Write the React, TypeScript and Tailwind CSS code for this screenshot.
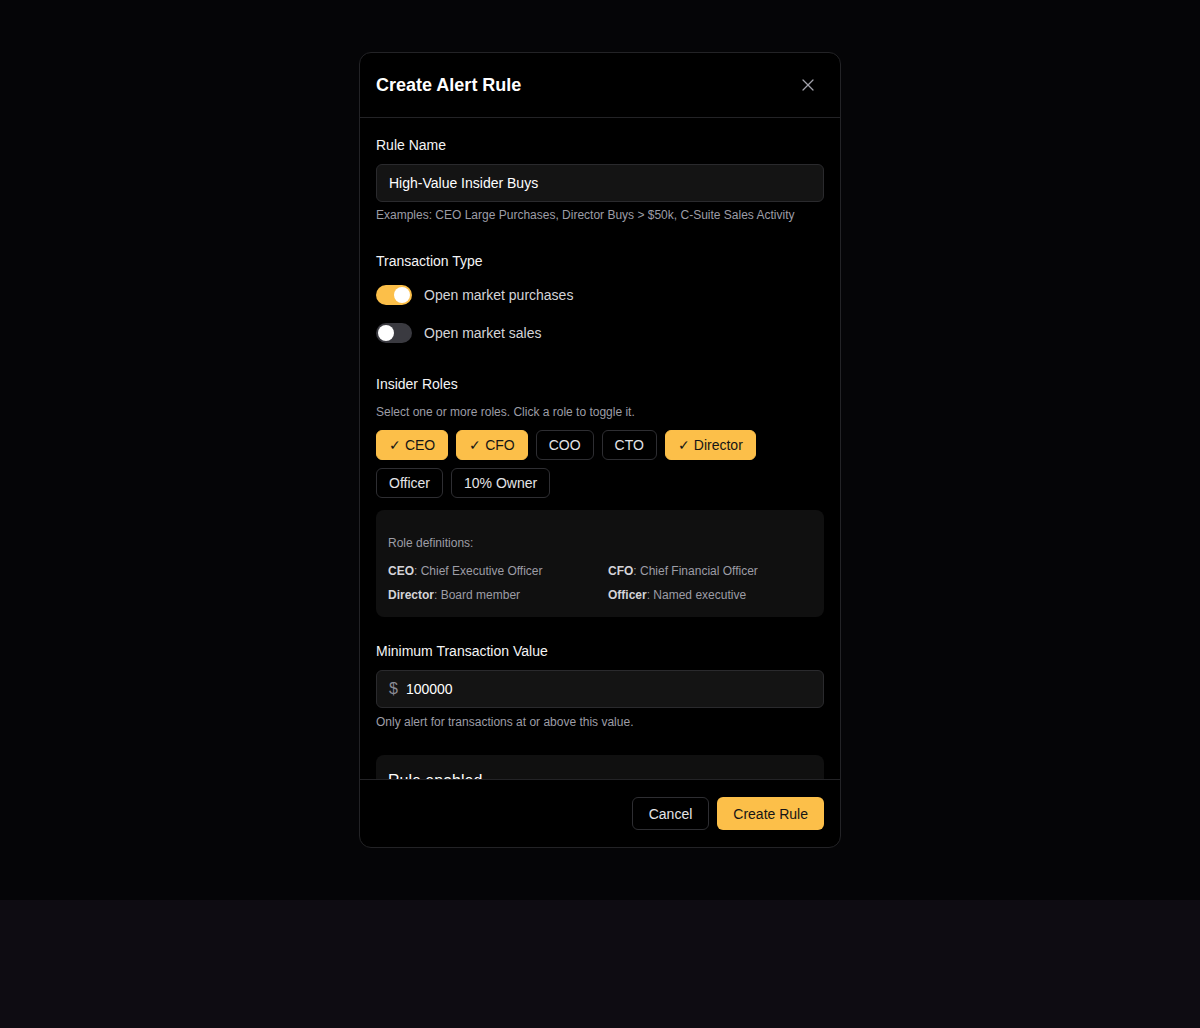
import { X } from "lucide-react";

const roles = [
  { label: "CEO", on: true },
  { label: "CFO", on: true },
  { label: "COO", on: false },
  { label: "CTO", on: false },
  { label: "Director", on: true },
  { label: "Officer", on: false },
  { label: "10% Owner", on: false },
];

const defs = [
  { key: "CEO", text: "Chief Executive Officer" },
  { key: "CFO", text: "Chief Financial Officer" },
  { key: "Director", text: "Board member" },
  { key: "Officer", text: "Named executive" },
];

function Toggle({ on, label }: { on: boolean; label: string }) {
  return (
    <div className="flex h-5 items-center gap-3">
      <span
        className={`flex h-5 w-9 items-center rounded-full p-0.5 ${
          on ? "justify-end bg-[#fcbf49]" : "justify-start bg-[#3a3a40]"
        }`}
      >
        <span className="h-4 w-4 rounded-full bg-white" />
      </span>
      <span className="text-sm text-[#d4d4d8]">{label}</span>
    </div>
  );
}

export default function App() {
  return (
    <div className="min-h-[1028px] bg-[#0e0c12] font-['Liberation_Sans',Arial,sans-serif]">
      <div className="flex h-[900px] items-center justify-center bg-[#050507]">
        <div className="flex h-[796px] w-[482px] flex-col overflow-hidden rounded-xl border border-[#232326] bg-black">
          <header className="flex h-[65px] shrink-0 items-center justify-between border-b border-[#232326] px-4">
            <h2 className="text-lg font-bold text-white">Create Alert Rule</h2>
            <button className="grid h-8 w-8 place-items-center text-[#a1a1aa]">
              <X size={20} strokeWidth={1.5} />
            </button>
          </header>

          <div className="min-h-0 flex-1 overflow-hidden px-4 pt-[17px]">
            <section>
              <label className="mb-[9px] block text-sm text-[#f4f4f5]">Rule Name</label>
              <div className="flex h-[38px] items-center rounded-md border border-[#2a2a2d] bg-[#141414] px-3 text-sm text-white">
                High-Value Insider Buys
              </div>
              <p className="mt-[5px] text-xs text-[#9d9da6]">
                Examples: CEO Large Purchases, Director Buys &gt; $50k, C-Suite Sales Activity
              </p>
            </section>

            <section className="mt-[28px]">
              <label className="block text-sm text-[#f4f4f5]">Transaction Type</label>
              <div className="mt-[14px] flex flex-col gap-[18px]">
                <Toggle on label="Open market purchases" />
                <Toggle on={false} label="Open market sales" />
              </div>
            </section>

            <section className="mt-[31px]">
              <label className="block text-sm text-[#f4f4f5]">Insider Roles</label>
              <p className="mt-[10px] text-xs text-[#9d9da6]">Select one or more roles. Click a role to toggle it.</p>
              <div className="mt-[10px] flex flex-wrap gap-2">
                {roles.map((r) => (
                  <button
                    key={r.label}
                    className={`flex h-[30px] items-center rounded-md border px-3 text-sm ${
                      r.on
                        ? "border-[#fcbf49] bg-[#fcbf49] text-[#151515]"
                        : "border-[#2e2e32] bg-black text-[#e4e4e7]"
                    }`}
                  >
                    {r.on ? "✓ " : ""}
                    {r.label}
                  </button>
                ))}
              </div>
              <div className="mt-3 rounded-lg bg-[#101010] px-3 pt-[25px] pb-[14px]">
                <p className="text-xs text-[#9d9da6]">Role definitions:</p>
                <div className="mt-3 grid grid-cols-2 gap-x-4 gap-y-2 text-xs text-[#9d9da6]">
                  {defs.map((d) => (
                    <div key={d.key}>
                      <b className="text-[#d4d4d8]">{d.key}</b>: {d.text}
                    </div>
                  ))}
                </div>
              </div>
            </section>

            <section className="mt-6">
              <label className="mb-[9px] block text-sm text-[#f4f4f5]">Minimum Transaction Value</label>
              <div className="flex h-[38px] items-center gap-2 rounded-md border border-[#2a2a2d] bg-[#141414] px-3 text-sm">
                <span className="text-base text-[#8b8b94]">$</span>
                <span className="text-white">100000</span>
              </div>
              <p className="mt-[6px] text-xs text-[#9d9da6]">Only alert for transactions at or above this value.</p>
            </section>

            <section className="mt-[25px] rounded-lg bg-[#101010] px-3 pt-[14px] pb-4">
              <p className="text-base text-white">Rule enabled</p>
              <p className="mt-1 text-xs text-[#9d9da6]">Pause this rule without deleting it.</p>
            </section>
          </div>

          <footer className="flex h-[68px] shrink-0 items-center justify-end gap-2 border-t border-[#232326] px-4">
            <button className="h-[33px] rounded-md border border-[#2e2e32] bg-black px-4 text-sm text-[#e4e4e7]">
              Cancel
            </button>
            <button className="h-[33px] rounded-md bg-[#fcbf49] px-4 text-sm text-[#151515]">Create Rule</button>
          </footer>
        </div>
      </div>
    </div>
  );
}
